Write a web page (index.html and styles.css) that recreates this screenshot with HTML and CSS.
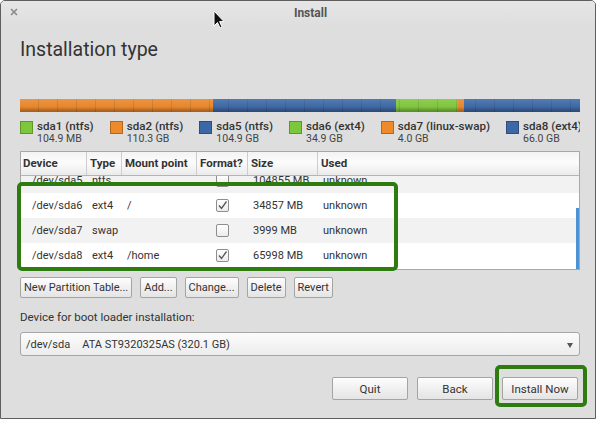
FILE: index.html
```html
<!DOCTYPE html>
<html>
<head>
<meta charset="utf-8">
<link rel="stylesheet" href="styles.css">
</head>
<body>
<div class="window">
  <div class="titlebar">
    <svg class="close" width="8" height="8" viewBox="0 0 8 8"><path d="M1 1 L7 7 M7 1 L1 7" stroke="#8a8a8a" stroke-width="1.6" fill="none"/></svg>
    <span class="title">Install</span>
  </div>
  <div class="content">
    <h1 class="heading">Installation type</h1>
    <div class="bar">
      <div class="seg orange" style="width:193px"></div>
      <div class="seg blue" style="width:183px"></div>
      <div class="seg green" style="width:62px"></div>
      <div class="seg orange" style="width:6px"></div>
      <div class="seg blue" style="width:116px"></div>
    </div>
    <div class="legend">
      <div class="item"><span class="sw green"></span><div class="lt"><div class="name">sda1 (ntfs)</div><div class="size">104.9 MB</div></div></div>
      <div class="item"><span class="sw orange"></span><div class="lt"><div class="name">sda2 (ntfs)</div><div class="size">110.3 GB</div></div></div>
      <div class="item"><span class="sw blue"></span><div class="lt"><div class="name">sda5 (ntfs)</div><div class="size">104.9 GB</div></div></div>
      <div class="item"><span class="sw green"></span><div class="lt"><div class="name">sda6 (ext4)</div><div class="size">34.9 GB</div></div></div>
      <div class="item"><span class="sw orange"></span><div class="lt"><div class="name">sda7 (linux-swap)</div><div class="size">4.0 GB</div></div></div>
      <div class="item"><span class="sw blue"></span><div class="lt"><div class="name">sda8 (ext4)</div><div class="size">66.0 GB</div></div></div>
    </div>
    <div class="table-wrap">
      <div class="table">
        <div class="thead">
          <div class="th c-dev">Device</div>
          <div class="th c-type">Type</div>
          <div class="th c-mount">Mount point</div>
          <div class="th c-fmt">Format?</div>
          <div class="th c-size">Size</div>
          <div class="th c-used">Used</div>
        </div>
        <div class="viewport">
          <div class="rows">
            <div class="row alt">
              <div class="td c-dev dev">/dev/sda5</div><div class="td c-type">ntfs</div><div class="td c-mount"></div>
              <div class="td c-fmt"><span class="cb"></span></div><div class="td c-size">104855 MB</div><div class="td c-used">unknown</div>
            </div>
            <div class="row">
              <div class="td c-dev dev">/dev/sda6</div><div class="td c-type">ext4</div><div class="td c-mount">/</div>
              <div class="td c-fmt"><span class="cb"><svg width="11" height="11" viewBox="0 0 11 11"><path d="M2 5.5 L4.5 8.5 L9.5 1.5" stroke="#555" stroke-width="1.3" fill="none"/></svg></span></div><div class="td c-size">34857 MB</div><div class="td c-used">unknown</div>
            </div>
            <div class="row alt">
              <div class="td c-dev dev">/dev/sda7</div><div class="td c-type">swap</div><div class="td c-mount"></div>
              <div class="td c-fmt"><span class="cb"></span></div><div class="td c-size">3999 MB</div><div class="td c-used">unknown</div>
            </div>
            <div class="row">
              <div class="td c-dev dev">/dev/sda8</div><div class="td c-type">ext4</div><div class="td c-mount">/home</div>
              <div class="td c-fmt"><span class="cb"><svg width="11" height="11" viewBox="0 0 11 11"><path d="M2 5.5 L4.5 8.5 L9.5 1.5" stroke="#555" stroke-width="1.3" fill="none"/></svg></span></div><div class="td c-size">65998 MB</div><div class="td c-used">unknown</div>
            </div>
          </div>
          <div class="scrollbar"></div>
        </div>
      </div>
      <div class="hl-table"></div>
    </div>
    <div class="tools">
      <button class="btn">New Partition Table...</button>
      <button class="btn">Add...</button>
      <button class="btn">Change...</button>
      <button class="btn">Delete</button>
      <button class="btn">Revert</button>
    </div>
    <div class="boot-label">Device for boot loader installation:</div>
    <div class="combo">
      <span class="combo-dev">/dev/sda</span><span class="combo-name">ATA ST9320325AS (320.1 GB)</span>
      <span class="combo-arrow"></span>
    </div>
    <div class="actions">
      <button class="btn big">Quit</button>
      <button class="btn big">Back</button>
      <div class="install-wrap">
        <button class="btn big">Install Now</button>
        <div class="hl-install"></div>
      </div>
    </div>
  </div>
  <svg class="cursor" width="13" height="20" viewBox="0 0 13 20"><path d="M1 1 L1 16 L4.5 12.5 L7 18 L9 17 L6.6 11.6 L11 11.6 Z" fill="#111" stroke="#fff" stroke-width="1"/></svg>
</div>
</body>
</html>
```
FILE: styles.css
```css
* { box-sizing: border-box; }
html, body { margin: 0; padding: 0; background: #ffffff; }
body { font-family: Roboto, "Open Sans", sans-serif; color: #333; }

.window {
  position: relative;
  width: 596px;
  height: 419px;
  border: 1px solid #5e5e5e;
  border-radius: 5px 5px 0 0;
  background: #dedede;
  overflow: hidden;
}

.titlebar {
  height: 25px;
  display: flex;
  align-items: center;
  padding-left: 9px;
  background: linear-gradient(#e6e6e6, #dedede);
}
.close { display: block; flex: none; margin-top: -3px; }
.title {
  flex: 1;
  text-align: center;
  padding-left: 8px;
  font-size: 12px;
  font-weight: 700;
  color: #555;
  margin-top: -2px;
}

.content { padding: 0 15px 0 19px; }

.heading {
  margin: 12px 0 0 0;
  font-size: 19.5px;
  line-height: 24px;
  font-weight: 400;
  color: #333;
}

.bar {
  margin-top: 37px;
  height: 13px;
  display: flex;
  position: relative;
}
.seg { height: 13px; flex: none; position: relative; }
.seg.orange { background: #e8862c; }
.seg.blue { background: #3e69a5; }
.seg.green { background: #80c53e; }
.bar::after {
  content: "";
  position: absolute;
  inset: 0;
  background:
    linear-gradient(rgba(255,255,255,0.12), rgba(255,255,255,0) 60%, rgba(0,0,0,0.22) 85%, rgba(0,0,0,0.3)),
    repeating-linear-gradient(90deg, rgba(0,0,0,0) 0 18px, rgba(0,0,0,0.1) 18px 19px);
}

.legend {
  margin-top: 7px;
  display: flex;
  gap: 16px;
  white-space: nowrap;
  overflow: hidden;
}
.item { display: flex; gap: 4px; flex: none; }
.lt { flex: none; }
.sw {
  width: 13px; height: 13px; margin-top: 2px;
  border: 1px solid rgba(0,0,0,0.25);
  flex: none;
}
.sw.green { background: #7dc83a; }
.sw.orange { background: #ef8a2a; }
.sw.blue { background: #3d68a6; }
.name { font-size: 11.6px; line-height: 14px; font-weight: 500; color: #333; }
.size { font-size: 10.5px; line-height: 12px; color: #444; }

.table-wrap { position: relative; margin-top: 6px; }
.table {
  border: 1px solid #a8a8a8;
  background: #fff;
  height: 119px;
}
.thead {
  height: 24px;
  display: flex;
  background: linear-gradient(#f3f3f3, #fcfcfc 45%, #ebebeb);
  border-bottom: 1px solid #b4b4b4;
}
.th {
  font-size: 11.5px;
  font-weight: 700;
  line-height: 23px;
  padding-left: 3px;
  border-right: 1px solid #cdcdcd;
  color: #333;
  white-space: nowrap;
}
.th.c-dev { padding-left: 2px; }
.c-dev { width: 66px; }
.c-type { width: 35px; }
.c-mount { width: 75px; }
.c-fmt { width: 51px; }
.c-size { width: 70px; }
.c-used { flex: 1; border-right: none; }

.viewport { position: relative; height: 93px; overflow: hidden; }
.rows { margin-top: -8px; }
.row { display: flex; height: 25px; background: #fff; }
.row.alt { background: #f2f2f2; }
.td {
  font-size: 11px;
  line-height: 25px;
  padding-left: 5px;
  color: #333;
  white-space: nowrap;
  overflow: hidden;
}
.td.dev { padding-left: 11px; }
.td.c-fmt { display: flex; align-items: center; justify-content: center; padding-left: 0; }
.cb {
  width: 13px; height: 13px;
  border: 1px solid #8e8e8e;
  border-radius: 2px;
  background: linear-gradient(#ffffff, #ececec);
  display: flex; align-items: center; justify-content: center;
}
.cb svg { display: block; }
.scrollbar {
  position: absolute;
  right: 0;
  top: 32px;
  bottom: 0;
  width: 3px;
  background: #4d92d2;
}

.hl-table {
  position: absolute;
  left: -3px;
  top: 31px;
  width: 381px;
  height: 89px;
  border: 4px solid #2e7b10;
  border-radius: 5px;
  pointer-events: none;
}

.tools { display: flex; gap: 8px; margin-top: 7px; }
.btn {
  font-family: Roboto, "Open Sans", sans-serif;
  font-size: 11px;
  color: #333;
  height: 21px;
  padding: 0 3px;
  border: 1px solid #a4a4a4;
  border-radius: 2px;
  background: linear-gradient(#fdfdfd, #e4e4e4);
  line-height: 18px;
  margin: 0;
}

.boot-label { margin-top: 11px; font-size: 11.5px; line-height: 16px; color: #333; }

.combo {
  margin-top: 7px;
  height: 24px;
  border: 1px solid #a6a6a6;
  border-radius: 3px;
  background: linear-gradient(#fcfcfc, #ececec);
  display: flex;
  align-items: center;
  padding-left: 5px;
  font-size: 11px;
  color: #333;
  position: relative;
}
.combo-name { margin-left: 12px; }
.combo-arrow {
  margin-left: auto;
  margin-right: 6px;
  width: 0; height: 0;
  border-left: 3.5px solid transparent;
  border-right: 3.5px solid transparent;
  border-top: 5px solid #555;
  margin-top: 2px;
}

.actions {
  margin-top: 21px;
  display: flex;
  justify-content: flex-end;
  gap: 9px;
  padding-right: 2px;
}
.btn.big { width: 76px; height: 23px; font-size: 11.5px; padding: 0; }
.install-wrap { position: relative; }
.hl-install {
  position: absolute;
  left: -7px;
  top: -12px;
  right: -9px;
  bottom: -7px;
  border: 4px solid #2e7b10;
  border-radius: 5px;
  pointer-events: none;
}

.cursor { position: absolute; left: 212px; top: 9px; }
```
